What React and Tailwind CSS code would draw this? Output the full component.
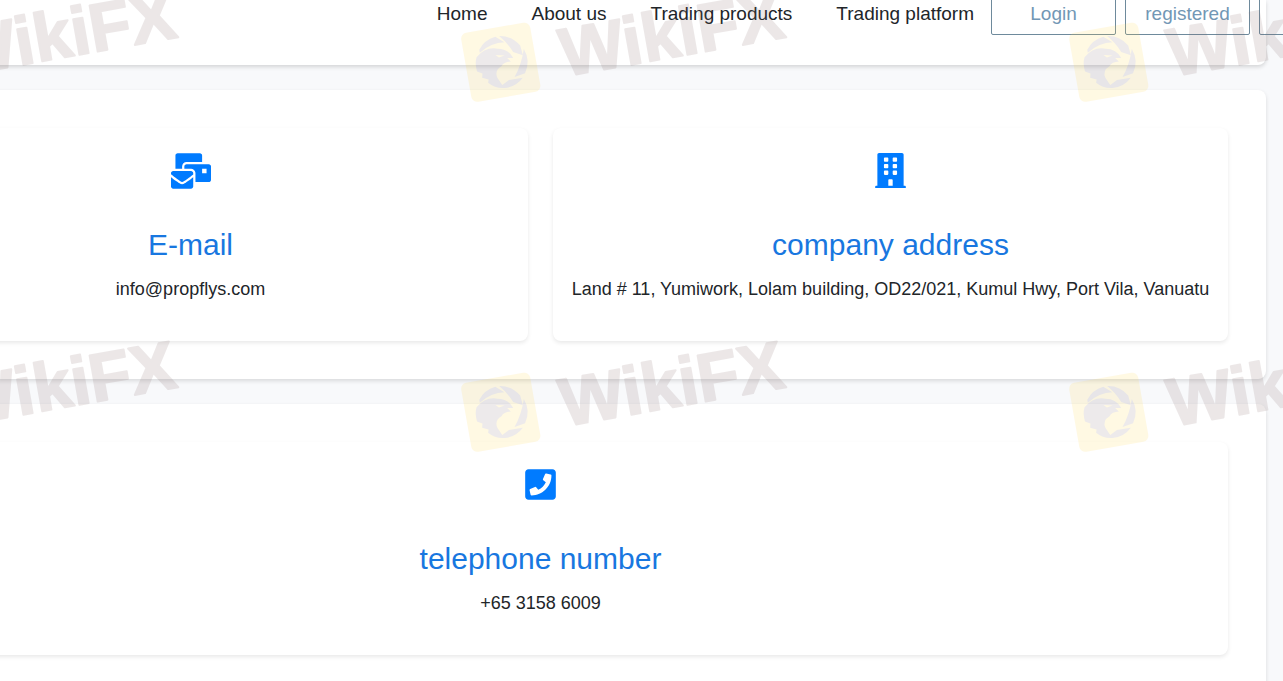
import React from "react";
import { FaMailBulk, FaBuilding, FaPhoneSquare } from "react-icons/fa";

const links = ["Home", "About us", "Trading products", "Trading platform"];

function NavButton({ children, ...props }) {
    return (
        <button className="w-[125px] h-11 shrink-0 rounded-xs border border-[#6e8a9c] pt-px text-[#7297b5]" {...props}>
            {children}
        </button>
    );
}

function Section({ children }) {
    return (
        <section className="grid grid-flow-col auto-cols-fr gap-[25px] rounded-lg bg-white p-[38px] shadow-[0_2px_4px_rgba(0,0,0,0.13)]">
            {children}
        </section>
    );
}

function ContactCard({ icon, title, text }) {
    return (
        <div className="flex flex-col items-center rounded-lg bg-white px-4 pt-[25px] pb-[38px] text-center shadow-[0_2px_4px_rgba(0,0,0,0.09)]">
            <div className="flex h-[35px] items-center text-[#007bff]">{icon}</div>
            <h2 className="mt-[39px] text-[30px] leading-9 text-[#1877e0]">{title}</h2>
            <p className="mt-3 leading-7">{text}</p>
        </div>
    );
}

function Watermark() {
    return (
        <svg viewBox="0 0 334 90" className="h-[90px] w-[334px] -rotate-10" aria-hidden="true">
            <g transform="translate(4 9)">
                <rect width="70" height="70" rx="6" fill="#ffd84a" />
                <g fill="#8a7880">
                    <path d="M16 19A26 26 0 0 1 34 9L42 16Q29 14 16 22Z" />
                    <path d="M38 9A26 26 0 0 1 57 22L58 32L49 27Q45 17 38 9Z" />
                    <path d="M60 26A26 26 0 0 1 57 50L46 52Q55 41 60 26Z" />
                    <path d="M54 54A26 26 0 0 1 34 61L30 59L40 54Z" />
                    <path d="M12 26Q22 17 34 21Q45 23 48 33L42 32L45 36Q38 35 35 39Q27 42 29 50L34 61Q25 60 19 53L20 50L14 47L15 43L10 40Q9 32 12 26Z" />
                </g>
                <path d="M31 27L40 29L34 30Z" fill="#ffd84a" />
            </g>
            <text
                x="99"
                y="69"
                className="font-bold"
                fontSize="68"
                fill="#836768"
                stroke="#836768"
                strokeWidth="2"
                strokeLinejoin="round"
            >
                WikiFX
            </text>
        </svg>
    );
}

function App() {
    return (
        <div className="relative min-h-screen overflow-hidden bg-[#f8f9fb] font-['Liberation_Sans',sans-serif] text-lg text-[#212529]">
            <div className="-ml-[185px] mr-[17px] flex flex-col gap-[25px]">
                <header className="rounded-b-lg bg-white pb-[30px] shadow-[0_2px_4px_rgba(0,0,0,0.15)]">
                    <nav className="-mt-[9px] -mr-[118px] flex items-center justify-end gap-[9px] text-[19px]">
                        <div className="flex gap-11 pt-0.5 pr-2 whitespace-nowrap">
                            {links.map((link) => (
                                <a key={link} href="#">{link}</a>
                            ))}
                        </div>
                        <NavButton>Login</NavButton>
                        <NavButton>registered</NavButton>
                        <NavButton aria-label="Language" />
                    </nav>
                </header>
                <Section>
                    <ContactCard
                        icon={<FaMailBulk className="size-10" />}
                        title="E-mail"
                        text="info@propflys.com"
                    />
                    <ContactCard
                        icon={<FaBuilding className="h-[35px] w-auto" />}
                        title="company address"
                        text="Land # 11, Yumiwork, Lolam building, OD22/021, Kumul Hwy, Port Vila, Vanuatu"
                    />
                </Section>
                <Section>
                    <ContactCard
                        icon={<FaPhoneSquare className="h-[35px] w-auto" />}
                        title="telephone number"
                        text="+65 3158 6009"
                    />
                </Section>
            </div>
            {/* tiled brand mark laid over the whole page */}
            <div className="pointer-events-none absolute -top-1 -left-[148px] grid grid-cols-[repeat(3,608px)] gap-y-[260px] opacity-15">
                {[0, 1, 2, 3, 4, 5].map((n) => (
                    <Watermark key={n} />
                ))}
            </div>
        </div>
    );
}

export default App;
